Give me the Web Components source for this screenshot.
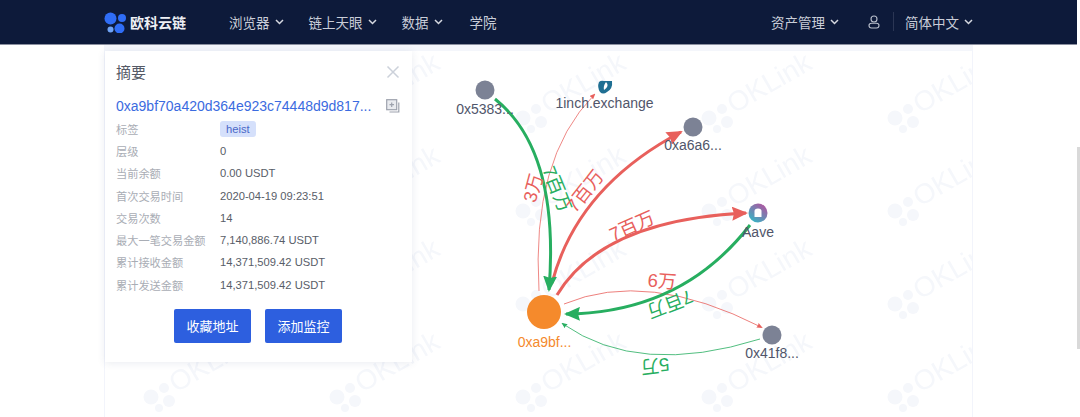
<!DOCTYPE html>
<html lang="zh">
<head>
<meta charset="utf-8">
<title>OKLink</title>
<style>
html, body {
    margin: 0;
    height: 417px;
    overflow: hidden;
    background: #fff;
    font-family: "Liberation Sans", "Noto Sans CJK SC", sans-serif;
}
</style>
</head>
<body>
<oklink-page>
    <top-bar slot="bar">
        <nav-link has-menu>浏览器</nav-link>
        <nav-link has-menu style="margin-left:25px">链上天眼</nav-link>
        <nav-link has-menu style="margin-left:25px">数据</nav-link>
        <nav-link style="margin-left:27px">学院</nav-link>
        <nav-link slot="right" has-menu>资产管理</nav-link>
    </top-bar>
    <summary-card>
        <info-row label="标签"><tag-chip>heist</tag-chip></info-row>
        <info-row label="层级">0</info-row>
        <info-row label="当前余额">0.00 USDT</info-row>
        <info-row label="首次交易时间">2020-04-19 09:23:51</info-row>
        <info-row label="交易次数">14</info-row>
        <info-row label="最大一笔交易金额">7,140,886.74 USDT</info-row>
        <info-row label="累计接收金额">14,371,509.42 USDT</info-row>
        <info-row label="累计发送金额">14,371,509.42 USDT</info-row>
    </summary-card>
    <tx-graph></tx-graph>
</oklink-page>

<script>
const CJK = '"Liberation Sans", "Noto Sans CJK SC", sans-serif';

customElements.define('oklink-page', class extends HTMLElement {
    constructor() {
        super();
        this.attachShadow({ mode: 'open' }).innerHTML = `
        <style>
        :host {
            display: block;
            position: relative;
            height: 417px;
            font-family: ${CJK};
        }
        .panel {
            position: relative;
            box-sizing: border-box;
            margin-left: 104px;
            width: 869px;
            height: 373px;
            border-top: 6px solid #f4f6fb;
            border-left: 1px solid #f2f4fb;
            border-right: 1px solid #f2f4fb;
        }
        .scroll-thumb {
            position: absolute;
            right: 0;
            top: 147px;
            width: 3px;
            height: 202px;
            background: #d9d9d9;
        }
        </style>
        <slot name="bar"></slot>
        <div class="panel"><slot></slot></div>
        <div class="scroll-thumb"></div>
        `;
    }
});

customElements.define('top-bar', class extends HTMLElement {
    constructor() {
        super();
        this.attachShadow({ mode: 'open' }).innerHTML = `
        <style>
        :host {
            display: flex;
            align-items: center;
            box-sizing: border-box;
            width: 1077px;
            height: 44.5px;
            padding: 0 104px;
            background: #0d1a3a;
            border-bottom: 1px solid #8b90a0;
        }
        .brand {
            display: flex;
            align-items: center;
            gap: 4px;
            margin-right: 43px;
            color: #eef0f5;
            font-size: 14px;
            font-weight: 700;
        }
        .spacer { flex: 1; }
        .user {
            display: block;
            margin-left: 29px;
        }
        .divider {
            width: 1px;
            height: 19px;
            margin: 0 11px 0 13px;
            background: #2b3654;
        }
        </style>
        <div class="brand">
            <svg width="22" height="22" viewBox="0 0 22 22">
                <circle cx="6.5" cy="7.5" r="6" fill="#2f6df6"/>
                <circle cx="18" cy="7" r="4" fill="#2f6df6"/>
                <circle cx="15.5" cy="17.500" r="5" fill="#2f6df6"/>
                <circle cx="6.5" cy="18.5" r="3" fill="#6fa3f5"/>
            </svg>
            <span>欧科云链</span>
        </div>
        <slot></slot>
        <div class="spacer"></div>
        <slot name="right"></slot>
        <svg class="user" width="12" height="14" viewBox="0 0 12 14" fill="none" stroke="#b9bfcc" stroke-width="1.1">
            <circle cx="6" cy="4" r="3"/>
            <path d="M3.5 8.2H8.5Q11 8.2 11 10.5Q11 13 8.5 13H3.5Q1 13 1 10.5Q1 8.2 3.5 8.2Z"/>
        </svg>
        <div class="divider"></div>
        <nav-link has-menu>简体中文</nav-link>
        `;
    }
});

customElements.define('nav-link', class extends HTMLElement {
    constructor() {
        super();
        const caret = this.hasAttribute('has-menu') ? `
            <svg width="9" height="6" viewBox="0 0 9 6" fill="none" stroke="#d5d8e0" stroke-width="1.5">
                <path d="M1 1L4.5 4.5L8 1"/>
            </svg>` : '';
        this.attachShadow({ mode: 'open' }).innerHTML = `
        <style>
        :host {
            display: inline-flex;
            align-items: center;
            gap: 5px;
            color: #c9cdd8;
            font-size: 13.5px;
            white-space: nowrap;
        }
        </style>
        <slot></slot>${caret}
        `;
    }
});

customElements.define('summary-card', class extends HTMLElement {
    constructor() {
        super();
        this.attachShadow({ mode: 'open' }).innerHTML = `
        <style>
        :host {
            display: block;
            position: absolute;
            z-index: 2;
            left: 0;
            top: 0;
            box-sizing: border-box;
            width: 307px;
            height: 311px;
            padding: 9px 11px 0;
            background: #fff;
            box-shadow: 0 1px 8px rgba(40, 60, 110, 0.1);
        }
        .head, .hash {
            display: flex;
            align-items: center;
            justify-content: space-between;
        }
        .head { height: 24px; }
        h2 {
            margin: 0;
            color: #555a66;
            font-size: 15px;
            font-weight: 400;
        }
        .hash {
            height: 24px;
            margin: 10px 0 0;
            color: #3b6be0;
            font-size: 14px;
        }
        .icon { margin-right: 1px; }
        .rows {
            display: grid;
            grid-auto-rows: 22.3px;
        }
        .actions {
            display: flex;
            justify-content: center;
            gap: 14px;
            margin: 13px 0 0 -1px;
        }
        button {
            width: 77px;
            height: 34px;
            padding: 0;
            border: 0;
            border-radius: 2px;
            background: #2d5fdf;
            color: #fff;
            font: 13px ${CJK};
        }
        </style>
        <div class="head">
            <h2>摘要</h2>
            <svg class="icon" width="14" height="14" viewBox="0 0 14 14" stroke="#ccd1da" stroke-width="1.5">
                <path d="M1.5 1.5L12.5 12.5M12.5 1.5L1.5 12.5"/>
            </svg>
        </div>
        <div class="hash">
            <span>0xa9bf70a420d364e923c74448d9d817...</span>
            <svg class="icon" width="14" height="14" viewBox="0 0 14 14" fill="none" stroke="#9da2ad" stroke-width="1.2">
                <rect x="0.7" y="0.7" width="10" height="10" fill="#e9ebef"/>
                <path d="M12.8 3.5V13H3.5"/>
                <path d="M3.5 5.7H8M5.7 3.5V8"/>
            </svg>
        </div>
        <div class="rows"><slot></slot></div>
        <div class="actions">
            <button>收藏地址</button>
            <button>添加监控</button>
        </div>
        `;
    }
});

customElements.define('info-row', class extends HTMLElement {
    constructor() {
        super();
        this.attachShadow({ mode: 'open' }).innerHTML = `
        <style>
        :host {
            display: grid;
            grid-template-columns: 104px 1fr;
            align-items: center;
            color: #585d68;
            font-size: 11.2px;
        }
        .label { color: #a9adb5; }
        </style>
        <span class="label">${this.getAttribute('label')}</span>
        <span><slot></slot></span>
        `;
    }
});

customElements.define('tag-chip', class extends HTMLElement {
    constructor() {
        super();
        this.attachShadow({ mode: 'open' }).innerHTML = `
        <style>
        :host {
            display: inline-block;
            padding: 0 6px;
            line-height: 16px;
            border-radius: 3px;
            background: #d5e0fb;
            color: #4a68c8;
            font-size: 11.2px;
        }
        </style>
        <slot></slot>
        `;
    }
});

customElements.define('tx-graph', class extends HTMLElement {

    nodes = [
        { x: 485, y: 89, label: '0x5383...', ly: 112.5 },
        { x: 693, y: 126, label: '0xa6a6...', ly: 149 },
        { x: 772, y: 334, label: '0x41f8...', ly: 357 },
    ]

    edges = [
        { d: 'M539 290Q531 158 594 94', color: '#e8605c', width: 1, opacity: 0.75, end: 'redS' },
        { d: 'M564 303Q647 268 761 326', color: '#e8605c', width: 1, opacity: 0.8, end: 'redS' },
        { d: 'M760 338Q639 376 563 323', color: '#27ae60', width: 1, opacity: 0.8, end: 'greenS' },
        { d: 'M552 282Q577 186 681 131', color: '#e8605c', width: 3, end: 'redL' },
        { d: 'M557 294Q602 219 746 212', color: '#e8605c', width: 3, end: 'redL' },
        { d: 'M495 98Q560 150 549 289', color: '#27ae60', width: 3, end: 'greenL' },
        { d: 'M750 224Q682 312 566 313', color: '#27ae60', width: 3, end: 'greenL' },
    ]

    amounts = [
        { x: 533, y: 187, angle: -75, text: '3万', color: '#e8605c' },
        { x: 557, y: 188, angle: 68, text: '7百万', color: '#27ae60' },
        { x: 585, y: 190, angle: -52, text: '7百万', color: '#e8605c' },
        { x: 632, y: 225, angle: -24, text: '7百万', color: '#e8605c' },
        { x: 662, y: 280, angle: 4, text: '6万', color: '#e8605c' },
        { x: 670, y: 303, angle: 159, text: '7百万', color: '#27ae60' },
        { x: 655, y: 365, angle: 173, text: '5万', color: '#27ae60' },
    ]

    constructor() {
        super();
        this.attachShadow({ mode: 'open' }).innerHTML = `
        <style>
        :host {
            display: block;
            height: 100%;
        }
        svg { display: block; }
        text { font-family: ${CJK}; }
        .name {
            fill: #50556a;
            font-size: 14px;
            text-anchor: middle;
        }
        .amount {
            font-size: 18.5px;
            text-anchor: middle;
            dominant-baseline: central;
        }
        .mark {
            fill: #f5f7fb;
            font-family: "Liberation Sans", sans-serif;
            font-size: 28px;
        }
        </style>
        <svg width="867" height="367" viewBox="105 50 867 367">
            <defs>
                <pattern id="wm" x="880" y="50" width="186" height="93" patternUnits="userSpaceOnUse">
                    <g transform="translate(-880 -50)" fill="#f5f7fb">
                        <circle cx="895" cy="117" r="7.5"/>
                        <circle cx="908" cy="108" r="5"/>
                        <circle cx="913" cy="121" r="6"/>
                        <circle cx="903" cy="128" r="4"/>
                        <text class="mark" transform="translate(920 113) rotate(-30)">OKLink</text>
                    </g>
                </pattern>
                ${this.#marker('redL', '#e8605c', 16, 14)}
                ${this.#marker('greenL', '#27ae60', 16, 14)}
                ${this.#marker('redS', '#e8605c', 6, 5)}
                ${this.#marker('greenS', '#27ae60', 6, 5)}
                <linearGradient id="aave" x1="0.85" y1="0" x2="0.15" y2="1">
                    <stop offset="0" stop-color="#b6509e"/>
                    <stop offset="1" stop-color="#2ebac6"/>
                </linearGradient>
            </defs>
            <rect x="105" y="50" width="867" height="367" fill="url(#wm)"/>
            ${this.edges.map(e => `<path d="${e.d}" fill="none" stroke="${e.color}" stroke-width="${e.width}" stroke-opacity="${e.opacity || 1}" marker-end="url(#${e.end})"/>`).join('')}
            ${this.nodes.map(n => `<circle cx="${n.x}" cy="${n.y}" r="9.5" fill="#7c8295"/><text class="name" x="${n.x}" y="${n.ly}">${n.label}</text>`).join('')}

            <path d="M599 81Q601 79 604 80L612 80Q613 88 607 91Q603 94 600 91Q597 86 599 81Z" fill="#1f6f93"/>
            <path d="M606 81Q610 85 604 89Q603 85 606 81Z" fill="#fff"/>
            <text class="name" x="604.5" y="107">1inch.exchange</text>

            <circle cx="758" cy="212" r="9.5" fill="url(#aave)"/>
            <path d="M754.5 216V210Q754.5 207.5 758 207.5Q761.5 207.5 761.5 210V216Z" fill="#fff"/>
            <text class="name" x="758" y="236">Aave</text>

            <circle cx="544" cy="311" r="17" fill="#f58a2c"/>
            <text class="name" x="544.5" y="346" style="fill:#f58a2c">0xa9bf...</text>

            ${this.amounts.map(a => `<text class="amount" fill="${a.color}" transform="translate(${a.x} ${a.y}) rotate(${a.angle})">${a.text}</text>`).join('')}
        </svg>
        `;
    }

    #marker(id, color, len, wide) {
        const notch = len * 0.12;
        return `<marker id="${id}" markerUnits="userSpaceOnUse" markerWidth="${len}" markerHeight="${wide}"
            refX="${len - 2}" refY="${wide / 2}" orient="auto">
            <path d="M0 0L${len} ${wide / 2}L0 ${wide}L${notch} ${wide / 2}Z" fill="${color}"/>
        </marker>`;
    }
});
</script>
</body>
</html>
